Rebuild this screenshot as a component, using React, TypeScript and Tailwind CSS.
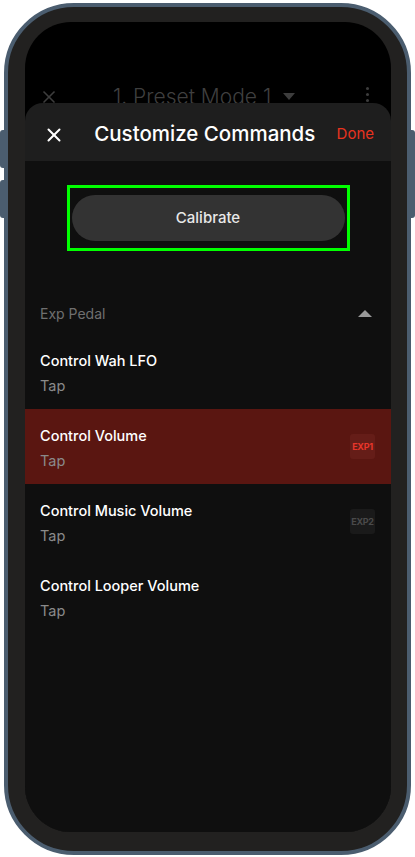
import { X } from "lucide-react";

const rows = [
  { title: "Control Wah LFO", badge: null, active: false },
  { title: "Control Volume", badge: "EXP1", active: true },
  { title: "Control Music Volume", badge: "EXP2", active: false },
  { title: "Control Looper Volume", badge: null, active: false },
];

export default function App() {
  return (
    <div
      className="relative w-[415px] h-[857px] bg-white overflow-hidden"
      style={{ fontFamily: "Inter, 'Noto Sans', sans-serif" }}
    >
      {/* side buttons */}
      <div className="absolute left-0 top-[130px] w-[6px] h-[38px] rounded-l-[3px] bg-[#4b5d6f]" />
      <div className="absolute left-0 top-[180px] w-[6px] h-[38px] rounded-l-[3px] bg-[#4b5d6f]" />
      <div className="absolute right-0 top-[130px] w-[6px] h-[88px] rounded-r-[3px] bg-[#4b5d6f]" />

      <div className="absolute left-[4px] top-[3px] w-[407px] h-[852px] rounded-[70px] border-[4px] border-[#4b5d6f] bg-[#222120] pl-[17px] pr-[16px] pt-[15px] pb-[19px]">
        <div className="flex flex-col w-full h-full rounded-[46px] overflow-hidden bg-black">
          {/* dimmed screen behind the sheet */}
          <div className="relative h-[81px] shrink-0">
            <div className="absolute left-0 right-0 top-[59px] flex items-center pl-[14px] pr-[15px]">
              <X className="w-[20px] h-[20px] text-[#3d3d3d]" strokeWidth={2} />
              <div className="flex-1 flex items-center gap-[12px] pl-[54px] text-[21px] font-light text-[#3f3f3f]">
                <span>1. Preset Mode 1</span>
                <span className="w-0 h-0 border-l-[6px] border-r-[6px] border-t-[7px] border-l-transparent border-r-transparent border-t-[#3d3d3d]" />
              </div>
              <div className="flex flex-col gap-[3px] mr-[7px] -mt-[4px]">
                <span className="w-[3px] h-[3px] rounded-full bg-[#3d3d3d]" />
                <span className="w-[3px] h-[3px] rounded-full bg-[#3d3d3d]" />
                <span className="w-[3px] h-[3px] rounded-full bg-[#3d3d3d]" />
              </div>
            </div>
          </div>

          {/* sheet */}
          <div className="relative flex-1 flex flex-col rounded-t-[18px] bg-[#1e1e1e] overflow-hidden">
            <div className="h-[58px] shrink-0 flex items-center pt-[5px] pl-[18px] pr-[17px]">
              <X className="w-[22px] h-[22px] text-white" strokeWidth={2.2} />
              <div className="flex-1 text-center text-[20.5px] font-medium text-white pl-[8px]">
                Customize Commands
              </div>
              <span className="text-[15px] text-[#e8331f]">Done</span>
            </div>

            <div className="flex-1 bg-[#0f0f0f] flex flex-col">
              <div className="pt-[24px] flex justify-center">
                <div className="w-[283px] h-[66px] border-[3px] border-[#00ff00] flex items-center justify-center">
                  <div className="w-[273px] h-[46px] rounded-full bg-[#333333] flex items-center justify-center text-[15px] font-medium text-[#e8e8e8]">
                    Calibrate
                  </div>
                </div>
              </div>

              <div className="mt-[52px] h-[20px] flex items-center justify-between pl-[15px] pr-[19px]">
                <span className="text-[14px] text-[#6f6f6f]">Exp Pedal</span>
                <span className="w-0 h-0 border-l-[7px] border-r-[7px] border-b-[7px] border-l-transparent border-r-transparent border-b-[#9a9a9a]" />
              </div>

              <div className="mt-[11px] flex flex-col">
                {rows.map((r) => (
                  <div
                    key={r.title}
                    className={
                      "h-[75px] flex items-center justify-between pl-[15px] pr-[16px] " +
                      (r.active ? "bg-[#5a1611]" : "")
                    }
                  >
                    <div className="flex flex-col gap-[6px] pt-[3px]">
                      <span className="text-[14.5px] font-medium text-white leading-[19px]">
                        {r.title}
                      </span>
                      <span className="text-[14.5px] text-[#8a8a8a] leading-[19px]">Tap</span>
                    </div>
                    {r.badge && (
                      <div
                        className={
                          "w-[25px] h-[25px] rounded-[3px] flex items-center justify-center text-[9px] font-bold tracking-[-0.3px] " +
                          (r.active
                            ? "bg-[#651d18] text-[#e8362a]"
                            : "bg-[#1a1a1a] text-[#4a4a4a]")
                        }
                      >
                        {r.badge}
                      </div>
                    )}
                  </div>
                ))}
              </div>
            </div>
          </div>
        </div>
      </div>
    </div>
  );
}
